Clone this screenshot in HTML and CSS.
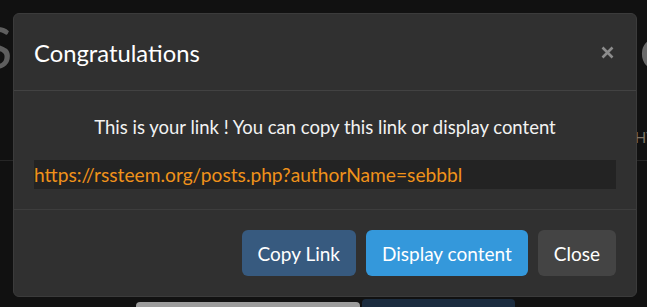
FILE: index.html
```html
<!DOCTYPE html>
<html lang="en">
<head>
<meta charset="utf-8">
<title>Congratulations</title>
<link rel="stylesheet" href="styles.css">
</head>
<body>
<div class="page">
  <div class="page-head">
    <span class="big big-left">S</span>
    <span class="big big-right">e</span>
  </div>
  <div class="page-mid">
    <span class="tag">HT</span>
  </div>
  <div class="page-rule"></div>
  <div class="page-bottom">
    <span class="bar bar-grey"></span>
    <span class="bar bar-blue"></span>
  </div>
</div>

<div class="modal" role="dialog">
  <div class="modal-header">
    <h4 class="modal-title">Congratulations</h4>
    <button class="close" aria-label="Close">
      <svg width="13" height="13" viewBox="0 0 13 13"><path d="M1.5 1.5 L11.5 11.5 M11.5 1.5 L1.5 11.5" stroke="#8c8c8c" stroke-width="2.6" stroke-linecap="butt"/></svg>
    </button>
  </div>
  <div class="modal-body">
    <p class="msg">This is your link ! You can copy this link or display content</p>
    <div class="link-box">https://rssteem.org/posts.php?authorName=sebbbl</div>
  </div>
  <div class="modal-footer">
    <button class="btn btn-primary">Copy Link</button>
    <button class="btn btn-info">Display content</button>
    <button class="btn btn-default">Close</button>
  </div>
</div>
</body>
</html>
```
FILE: styles.css
```css
html, body {
  margin: 0;
  padding: 0;
}
body {
  width: 647px;
  height: 307px;
  overflow: hidden;
  background: #111111;
  font-family: Lato, "Noto Sans", sans-serif;
  position: relative;
}

/* dimmed page behind the backdrop */
.page {
  height: 307px;
  display: flex;
  flex-direction: column;
}
.page-head {
  display: flex;
  justify-content: space-between;
  height: 90px;
}
.big {
  font-size: 58px;
  line-height: 90px;
  color: #5e5e5e;
  font-family: Lato, sans-serif;
}
.big-left { margin-left: -19px; margin-top: 2px; }
.big-right { margin-right: -23px; margin-top: 2px; color: #6a6a6a; }
.page-mid {
  height: 70px;
  display: flex;
  justify-content: flex-end;
}
.tag {
  font-size: 15px;
  color: #7d7466;
  margin-top: 38px;
  margin-right: -8px;
}
.page-rule {
  height: 1px;
  background: #262626;
}
.page-bottom {
  flex: 1;
  display: flex;
  align-items: flex-end;
  padding-left: 136px;
  gap: 2px;
}
.bar {
  display: block;
  border-radius: 4px 4px 0 0;
}
.bar-grey { width: 224px; height: 5px; background: #9c9c9c; }
.bar-blue { width: 153px; height: 8px; background: #1b2c3f; }

/* modal (overlay) */
.modal {
  position: absolute;
  left: 13px;
  top: 13px;
  width: 624px;
  height: 284px;
  box-sizing: border-box;
  background: #303030;
  border: 1px solid #3b3b3b;
  border-radius: 6px;
  display: flex;
  flex-direction: column;
  color: #ffffff;
}
.modal-header {
  height: 77px;
  box-sizing: border-box;
  border-bottom: 1px solid #424242;
  padding: 0 22px 0 20px;
  display: flex;
  align-items: center;
  justify-content: space-between;
}
.modal-title {
  margin: 0;
  font-size: 23.8px;
  font-weight: 400;
  line-height: 1.1;
  color: #ffffff;
  padding-top: 2px;
}
.close {
  background: none;
  border: 0;
  padding: 0;
  width: 13px;
  height: 13px;
  display: flex;
}
.modal-body {
  height: 119px;
  box-sizing: border-box;
  padding: 20px 20px 0;
  border-bottom: 1px solid #3d3d3d;
}
.msg {
  margin: 0;
  text-align: center;
  font-size: 18.5px;
  line-height: 32px;
  color: #f2f2f2;
}
.link-box {
  margin-top: 17px;
  height: 29px;
  background: #232323;
  color: #f0921a;
  font-size: 19.2px;
  line-height: 29px;
  padding: 0;
}
.modal-footer {
  flex: 1;
  display: flex;
  justify-content: flex-end;
  align-items: center;
  gap: 10px;
  padding: 0 20px;
}
.btn {
  height: 46px;
  padding: 0 16px;
  font-family: Lato, "Noto Sans", sans-serif;
  font-size: 19px;
  color: #ffffff;
  border: 0;
  border-radius: 6px;
}
.btn-primary { background: #375a7f; }
.btn-info { background: #3498db; }
.btn-default { background: #444444; }
```
